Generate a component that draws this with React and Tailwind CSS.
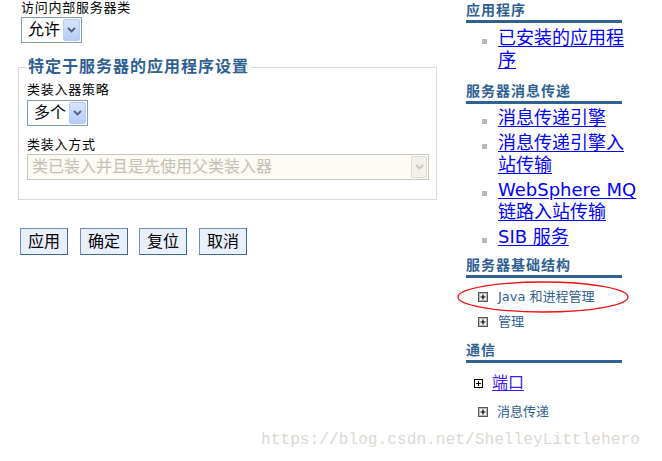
import React from "react";

const FONT = "font-['DejaVu_Sans','Noto_Sans_CJK_SC',sans-serif]";

function Chevron({ color }) {
  return (
    <svg width="9" height="6" viewBox="0 0 9 6">
      <path d="M1 1 L4.5 4.5 L8 1" fill="none" stroke={color} strokeWidth="1.8" />
    </svg>
  );
}

function Select({ text, width }) {
  return (
    <div className={`flex h-[26px] ${width} border border-[#7f9db9] bg-white`}>
      <div className="flex-1 pl-[6px] text-[16px] leading-[24px] text-black">{text}</div>
      <div className="m-[1px] flex w-[17px] items-center justify-center rounded-[2px] border border-[#b7ccf4] bg-gradient-to-b from-[#d7e3fc] to-[#b6cbf7]">
        <Chevron color="#4d6185" />
      </div>
    </div>
  );
}

function PlusIcon() {
  return (
    <svg width="10" height="10" viewBox="0 0 10 10">
      <rect x="0.5" y="0.5" width="9" height="9" fill="#e6e6e6" stroke="#555" />
      <rect x="1.5" y="1.5" width="7" height="7" fill="#f4f4f4" stroke="#bbb" />
      <path d="M5 2.5 V7.5 M2.5 5 H7.5" stroke="#000" strokeWidth="1.2" />
    </svg>
  );
}

function PlainPlus() {
  return (
    <svg width="9" height="9" viewBox="0 0 9 9">
      <rect x="0.5" y="0.5" width="8" height="8" fill="#fff" stroke="#000" />
      <path d="M4.5 2 V7 M2 4.5 H7" stroke="#000" strokeWidth="1" />
    </svg>
  );
}

function Heading({ children }) {
  return (
    <div className="w-[156px] border-b-[3px] border-[#2f6094] pb-[1px] text-[14px] font-bold leading-[17px] tracking-[1px] text-[#2f6094]">
      {children}
    </div>
  );
}

function Item({ children }) {
  return (
    <li className="flex">
      <span className="ml-[16px] mr-[11px] mt-[12px] h-[5px] w-[5px] shrink-0 bg-[#b8b8b8]" />
      <a className="w-[140px] text-[18px] leading-[22px] text-[#0000ff] underline underline-offset-[2px]">
        {children}
      </a>
    </li>
  );
}

function Button({ children, className }) {
  return (
    <button className={`h-[27px] w-[48px] border border-[#6f8fbf] border-b-[#40699a] border-r-[#40699a] bg-[#e9f0fb] text-[16px] leading-[25px] text-black ${className}`}>
      {children}
    </button>
  );
}

export default function App() {
  return (
    <div className={`relative flex h-[461px] w-[662px] overflow-hidden bg-white ${FONT}`}>
      {/* Left column */}
      <div className="w-[466px] shrink-0">
        <div className="pl-[21px] text-[13px] leading-[16px] tracking-[0.75px] text-black">访问内部服务器类</div>
        <div className="ml-[21px] mt-[1px]">
          <Select text="允许" width="w-[61px]" />
        </div>

        <fieldset className="ml-[18px] mt-[15px] w-[419px] border border-[#d9d9d9] pb-[19px] pl-[8px]">
          <legend className="pl-[1px] pr-[2px] text-[16px] font-bold leading-[18px] tracking-[1px] text-[#2f6094]">
            特定于服务器的应用程序设置
          </legend>
          <div className="mt-[6px] text-[13px] leading-[16px] tracking-[0.75px] text-black">类装入器策略</div>
          <div className="mt-[2px]">
            <Select text="多个" width="w-[61px]" />
          </div>
          <div className="mt-[11px] text-[13px] leading-[16px] tracking-[0.75px] text-black">类装入方式</div>
          <div className="mt-[1px] flex h-[26px] w-[402px] border border-[#c9c7ba] bg-[#fbfaf5]">
            <div className="flex-1 pl-[4px] text-[16px] leading-[24px] text-[#c3c0b3]">类已装入并且是先使用父类装入器</div>
            <div className="m-[1px] flex w-[16px] items-center justify-center rounded-[2px] border border-[#dedcd0] bg-[#f1f0ea]">
              <Chevron color="#c9c7ba" />
            </div>
          </div>
        </fieldset>

        <div className="ml-[20px] mt-[28px] flex">
          <Button>应用</Button>
          <Button className="ml-[12px]">确定</Button>
          <Button className="ml-[11px]">复位</Button>
          <Button className="ml-[12px]">取消</Button>
        </div>
      </div>

      {/* Right column */}
      <div className="flex-1 pt-[2px]">
        <Heading>应用程序</Heading>
        <ul className="mt-[4px] flex flex-col gap-[3px]">
          <Item>已安装的应用程序</Item>
        </ul>

        <div className="mt-[12px]">
          <Heading>服务器消息传递</Heading>
        </div>
        <ul className="mt-[3px] flex flex-col gap-[3px]">
          <Item>消息传递引擎</Item>
          <Item>消息传递引擎入站传输</Item>
          <Item>WebSphere MQ 链路入站传输</Item>
          <Item>SIB 服务</Item>
        </ul>

        <div className="mt-[9px]">
          <Heading>服务器基础结构</Heading>
        </div>
        <div className="mt-[6px] flex h-[25px] items-center pl-[12px] text-[13px] text-[#2f6094]">
          <PlusIcon />
          <span className="ml-[10px]">Java 和进程管理</span>
        </div>
        <div className="flex h-[25px] items-center pl-[12px] text-[13px] text-[#2f6094]">
          <PlusIcon />
          <span className="ml-[10px]">管理</span>
        </div>

        <div className="mt-[8px]">
          <Heading>通信</Heading>
        </div>
        <div className="mt-[8px] flex h-[24px] items-center pl-[8px]">
          <PlainPlus />
          <a className="ml-[9px] text-[16px] leading-[20px] text-[#3a1cff] underline underline-offset-[2px]">端口</a>
        </div>
        <div className="mt-[4px] flex h-[25px] items-center pl-[12px] text-[13px] text-[#2f6094]">
          <PlusIcon />
          <span className="ml-[9px]">消息传递</span>
        </div>
      </div>

      {/* Red annotation ellipse */}
      <svg className="pointer-events-none absolute left-[457px] top-[281px]" width="172" height="32" viewBox="0 0 172 32">
        <ellipse cx="86" cy="16" rx="85" ry="15" fill="none" stroke="#ee1111" strokeWidth="1.3" />
      </svg>

      {/* Watermark */}
      <div className="pointer-events-none absolute left-[261px] top-[430px] font-['Liberation_Mono',monospace] text-[16.2px] leading-[20px] text-[#dcd9d2]">
        https://blog.csdn.net/ShelleyLittlehero
      </div>
    </div>
  );
}
